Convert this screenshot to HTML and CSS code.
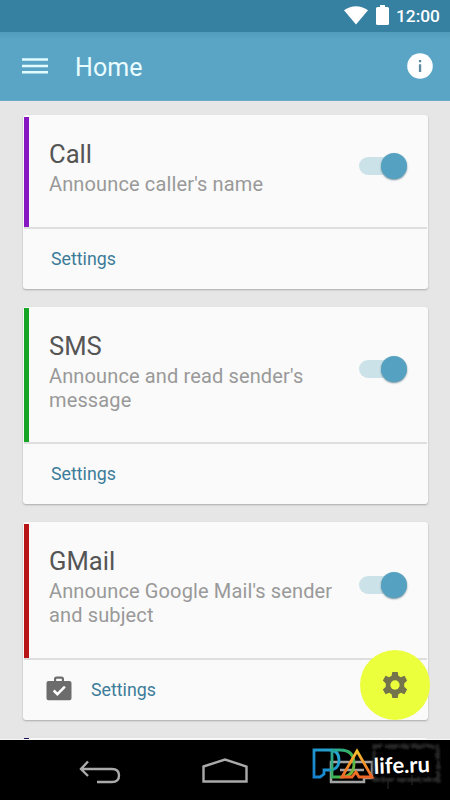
FILE: index.html
```html
<!DOCTYPE html>
<html lang="en">
<head>
<meta charset="utf-8">
<title>Home</title>
<link rel="stylesheet" href="styles.css">
</head>
<body>
<div class="screen">
  <div class="status">
    <svg class="wifi" width="24" height="19" viewBox="0 0 24 19"><path d="M0 4.200Q12-3.600 24 4.200L12 18.600Z" fill="#fff"/></svg>
    <svg class="battery" width="13" height="20" viewBox="0 0 13 20"><path d="M4 0h5v2h2.500q1.500 0 1.500 1.500v15q0 1.500-1.500 1.500h-10Q0 20 0 18.500v-15Q0 2 1.500 2H4Z" fill="#fff"/></svg>
    <span class="clock">12:00</span>
  </div>
  <header class="appbar">
    <svg class="menu" width="26" height="16" viewBox="0 0 26 16"><path d="M0 1.500h26M0 8h26M0 14.300h26" stroke="#e2fbff" stroke-width="2.500"/></svg>
    <h1>Home</h1>
    <svg class="info" width="26" height="26" viewBox="0 0 26 26"><circle cx="13" cy="13" r="12.800" fill="#fff"/><path d="M11.900 7h2.300v2.300h-2.300zM11.900 11.300h2.300v7.700h-2.300z" fill="#5d8ca0"/></svg>
  </header>
  <main>
    <section class="card call">
      <div class="top"><div class="copy"><h2>Call</h2><p>Announce caller's name</p></div><div class="switch"><i></i></div></div>
      <div class="foot"><a>Settings</a></div>
    </section>
    <section class="card sms">
      <div class="top"><div class="copy"><h2>SMS</h2><p>Announce and read sender's<br>message</p></div><div class="switch"><i></i></div></div>
      <div class="foot"><a>Settings</a></div>
    </section>
    <section class="card gmail">
      <div class="top"><div class="copy"><h2>GMail</h2><p>Announce Google Mail's sender<br>and subject</p></div><div class="switch"><i></i></div></div>
      <div class="foot">
        <svg class="case" width="26" height="25" viewBox="0 0 26 25"><path fill="#6c6c6c" fill-rule="evenodd" d="M8 5V3q0-2.500 2.500-2.500h5Q18 .5 18 3v2h5.500Q25.500 5 25.500 7v15.300q0 2-2 2h-21q-2 0-2-2V7q0-2 2-2ZM10.200 5h5.600V2.800h-5.600Z"/><path d="m7.700 14.500 3.700 3.700 7.500-7.500" fill="none" stroke="#fff" stroke-width="2.500"/></svg>
        <a>Settings</a>
      </div>
    </section>
    <section class="card next"><div class="top"></div></section>
  </main>
  <nav class="navbar">
    <svg class="back" width="43" height="24" viewBox="0 0 43 24"><path d="M9 1.500 2 9l7 7M2 9h31q7 0 7 6.500T33 22H18" fill="none" stroke="#aaa" stroke-width="2.400"/></svg>
    <svg class="home" width="46" height="25" viewBox="0 0 46 25"><path d="M1.500 8.500 23 1.500l21.500 7V23.500h-43Z" fill="none" stroke="#aaa" stroke-width="2.400"/></svg>
    <svg class="brand" width="145" height="60" viewBox="0 0 145 60">
      <defs>
        <linearGradient id="p" x1="0" y1="1" x2="1" y2="0"><stop stop-color="#1681cf"/><stop offset="1" stop-color="#28a9cf"/></linearGradient>
        <linearGradient id="d" x2="1" y2="1"><stop stop-color="#25a69e"/><stop offset=".6" stop-color="#3fb54e"/><stop offset="1" stop-color="#8cba35"/></linearGradient>
        <linearGradient id="a" x2="0" y2="1"><stop stop-color="#f5c22e"/><stop offset="1" stop-color="#ee6424"/></linearGradient>
        <filter id="dust" x="-5%" y="-20%" width="110%" height="140%"><feTurbulence type="fractalNoise" baseFrequency=".16" numOctaves="2" seed="4"/><feDisplacementMap in="SourceGraphic" scale="4"/><feGaussianBlur stdDeviation="1.200"/></filter>
      </defs>
      <path d="M26 22h41v16h-8v4H26ZM35 30h24" fill="none" stroke="#a4a4a4" stroke-width="2.500"/>
      <path d="M69 6h64v34H69Z" fill="#000" stroke="#2a2a2a" stroke-width="3.500" stroke-dasharray="9 2 14 1" filter="url(#dust)"/>
      <path d="M83 39v10M107 35v10" stroke="#2d2d2d"/>
      <path d="M9 37V10h15q10 0 10 10T24 30h-5v4l-4 3Z" fill="none" stroke="url(#p)" stroke-width="2.800"/>
      <path d="M27 37V10h8q14 0 14 13.500T35 37Z" fill="none" stroke="url(#d)" stroke-width="2.800"/>
      <path d="m37 37 15-26 15 26H54l-3-5-4 5Z" fill="none" stroke="url(#a)" stroke-width="2.800"/>
      <text class="brand-text" x="69" y="34" transform="rotate(-2 69 34)">life.ru</text>
    </svg>
  </nav>
  <button class="fab" aria-label="Options">
    <svg width="26" height="26" viewBox="0 0 24 24"><path fill="#73734c" d="M9.500 0h5l.6 3.500 2.300 1.300 3.300-1.300 2.500 4.300L20.500 10.500v3l2.700 2.700-2.500 4.300-3.300-1.300-2.300 1.300-.6 3.500h-5l-.6-3.500-2.300-1.300-3.300 1.300-2.500-4.300L3.500 13.500v-3L.8 7.800l2.500-4.300 3.300 1.300 2.300-1.300Z"/><circle cx="12" cy="12" r="4.300" fill="#ebff3d"/></svg>
  </button>
</div>
</body>
</html>
```
FILE: styles.css
```css
* { box-sizing: border-box; }
body, h1, h2, p { margin: 0; }
body { font-family: Roboto, sans-serif; }
.screen { position: relative; width: 450px; height: 800px; overflow: hidden; display: flex; flex-direction: column; background: #e6e6e6; }
.status { height: 32px; flex: none; display: flex; background: #3680a2; color: #fff; }
.wifi { margin: 6px 0 0 344px; }
.battery { margin: 5px 0 0 8px; }
.clock { margin: 6px 0 0 7px; font-size: 17.300px; line-height: 21px; font-weight: 500; white-space: nowrap; }
.appbar { height: 69px; flex: none; display: flex; align-items: center; padding-left: 22px; background: linear-gradient(#519bbb, #5aa5c5 8px); border-bottom: 1px solid #6aa9c4; }
.appbar h1 { width: 332px; padding-left: 27px; font-size: 25px; line-height: 30px; font-weight: 400; color: #e9fcff; letter-spacing: .1px; margin-top: 4px; }
.menu, .info { flex: none; }
.info { margin-left: 27px; }
main { height: 639px; flex: none; padding: 14px 23px 0; overflow: hidden; display: flex; flex-direction: column; gap: 18px; border-bottom: 1px solid #f4f4f4; }
.card { flex: none; width: 405px; background: #fafafa; border-radius: 3px; box-shadow: 0 1px 2px #aaa; padding: 1.5px 1px 0; }
.top { height: 110px; display: flex; justify-content: space-between; border-left: 5px solid var(--accent); padding-left: 20px; }
.sms .top, .gmail .top { height: 134px; }
.copy { padding-top: 21.5px; white-space: nowrap; }
h2 { font-size: 25.6px; line-height: 32px; font-weight: 400; color: #555; }
p { font-size: 20px; line-height: 24px; color: #999; margin-top: 2px; letter-spacing: .13px; }
.switch { flex: none; position: relative; width: 48px; height: 18px; margin: 40.5px 20px 0 0; border-radius: 9px; background: #cbe2e9; }
.sms .switch, .gmail .switch { margin-top: 52px; }
.switch i { position: absolute; right: 0.5px; top: -4px; width: 26px; height: 26px; border-radius: 50%; background: #55a1c1; box-shadow: 0 1px 2px #6b8c99; }
.foot { height: 62.2px; display: flex; align-items: center; padding-left: 27px; border-top: 2px solid #dedede; }
.foot a { font-size: 17.8px; line-height: 22px; color: #3c7c99; }
.call { --accent: #8617c2; }
.sms { --accent: #16a524; }
.gmail { --accent: #b81517; }
.next { --accent: #201055; padding-top: 0; }
.gmail .foot { padding-left: 22px; }
.gmail .foot a { margin-left: -1px; }
.case { margin: -3px 20px 0 0; }
.navbar { height: 60px; flex: none; display: flex; background: #000; }
.back { margin: 20px 0 0 79px; }
.home { margin: 18px 0 0 80px; }
.brand { margin: 0 0 0 57px; }
.brand-text { font-family: Lato, sans-serif; font-size: 22px; font-weight: 700; fill: #fff; }
.fab { position: absolute; left: 360px; top: 650px; width: 70px; height: 70px; padding: 0; border: 0; border-radius: 50%; background: #ebff3d; display: flex; align-items: center; justify-content: center; }
```
